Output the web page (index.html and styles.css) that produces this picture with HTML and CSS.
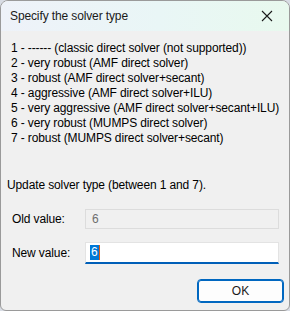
FILE: index.html
```html
<!DOCTYPE html>
<html lang="en">

<head>
  <meta charset="UTF-8">
  <title>Specify the solver type</title>
  <link rel="stylesheet" href="styles.css">
</head>

<body>
  <div class="window">
    <div class="titlebar">
      <span class="title">Specify the solver type</span>
      <svg class="close" width="12" height="12" viewBox="0 0 12 12">
        <path d="M1 1 L11 11 M11 1 L1 11" stroke="#1a1a1a" stroke-width="1.1" fill="none" />
      </svg>
    </div>

    <div class="content">
      <ul class="options">
        <li>1 - ------ (classic direct solver (not supported))</li>
        <li>2 - very robust (AMF direct solver)</li>
        <li>3 - robust (AMF direct solver+secant)</li>
        <li>4 - aggressive (AMF direct solver+ILU)</li>
        <li>5 - very aggressive (AMF direct solver+secant+ILU)</li>
        <li>6 - very robust (MUMPS direct solver)</li>
        <li>7 - robust (MUMPS direct solver+secant)</li>
      </ul>

      <p class="prompt">Update solver type (between 1 and 7).</p>

      <div class="field">
        <label>Old value:</label>
        <div class="input old">6</div>
      </div>
      <div class="field new-field">
        <label>New value:</label>
        <div class="input new"><span class="sel">6</span><span class="caret"></span></div>
      </div>

      <div class="actions">
        <button class="ok">OK</button>
      </div>
    </div>
  </div>
</body>

</html>
```

FILE: styles.css
```css
/* page */
body {
  margin: 0;
  background: #d8dce4;
  font-family: "Liberation Sans", Arial, sans-serif;
  font-size: 12px;
  letter-spacing: -0.12px;
  color: #000;
}

/* dialog window */
.window {
  width: 288px;
  height: 309px;
  border: 1px solid #9a9a9a;
  border-radius: 8px 8px 6px 6px;
  background: #f0f0f0;
  overflow: hidden;
  display: flex;
  flex-direction: column;
}

.titlebar {
  height: 30px;
  display: flex;
  align-items: center;
  justify-content: space-between;
  padding: 0 16px 0 9px;
  background: linear-gradient(90deg, #eef2f9, #e9f6f6 55%, #e8f9ee);
}

.title {
  font-size: 12px;
  color: #1a1a1a;
}

.close {
  display: block;
}

/* dialog body */
.content {
  flex: 1;
  padding: 10px 10px 0 6px;
  display: flex;
  flex-direction: column;
}

.options {
  list-style: none;
  margin: 0;
  padding: 0 0 0 4px;
}

.options li {
  line-height: 15px;
  white-space: nowrap;
}

.prompt {
  margin: 32px 0 0;
  line-height: 15px;
}

.field {
  display: flex;
  align-items: center;
  margin-top: 16px;
}

.new-field {
  margin-top: 13px;
}

.field label {
  width: 73px;
  padding-left: 5px;
}

.input {
  flex: 1;
  box-sizing: border-box;
  padding-left: 6px;
  display: flex;
  align-items: center;
}

.old {
  height: 20px;
  border: 1px solid #dcdcdc;
  background: #f0f0f0;
  color: #6d6d6d;
}

.new {
  height: 22px;
  border: 1px solid #e3e3e3;
  border-bottom: 2px solid #005fb8;
  background: #fff;
  padding-left: 4px;
}

.sel {
  background: #0078d7;
  color: #fff;
  line-height: 15px;
  padding: 0 1px;
}

.caret {
  width: 1px;
  height: 15px;
  background: #e05a10;
}

.actions {
  display: flex;
  justify-content: flex-end;
  margin-top: 15px;
}

.ok {
  width: 87px;
  height: 24px;
  margin-right: -5px;
  border: 1px solid #0067c0;
  border-radius: 4px;
  background: #fdfdfd;
  font-family: inherit;
  font-size: 12px;
  color: #1a1a1a;
  box-shadow: inset 0 0 0 1px #0067c0;
}
```
